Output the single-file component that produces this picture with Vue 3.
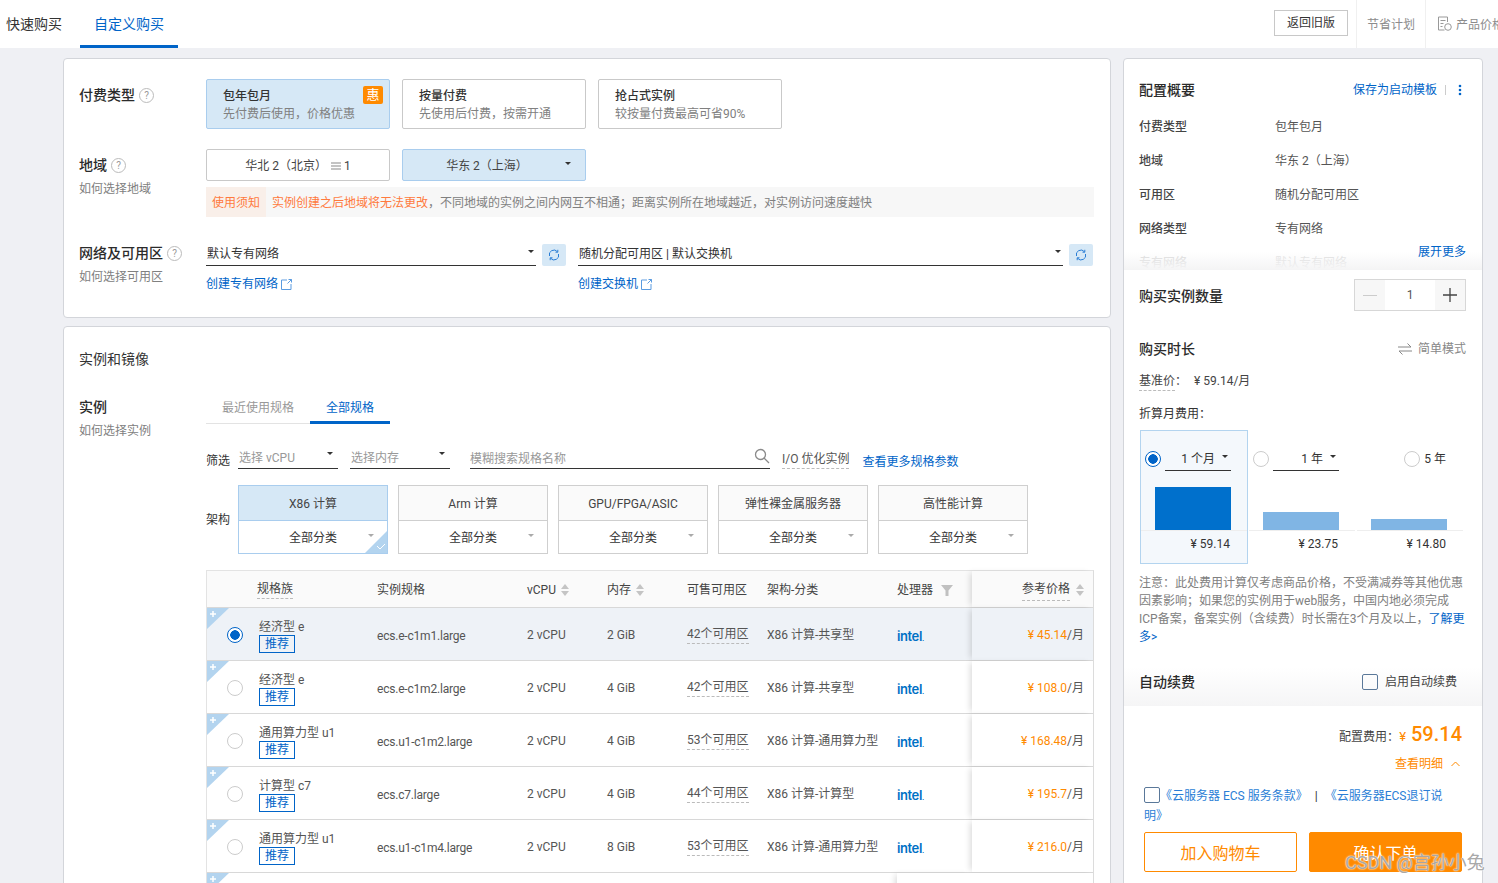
<script setup>
const pay = [
  { t: '包年包月', d: '先付费后使用，价格优惠', on: true },
  { t: '按量付费', d: '先使用后付费，按需开通' },
  { t: '抢占式实例', d: '较按量付费最高可省90%' }
]
const summary = [
  ['付费类型', '包年包月'],
  ['地域', '华东 2（上海）'],
  ['可用区', '随机分配可用区'],
  ['网络类型', '专有网络'],
  ['专有网络', '默认专有网络']
]
const arch = [
  { t: 'X86 计算', on: true },
  { t: 'Arm 计算' },
  { t: 'GPU/FPGA/ASIC' },
  { t: '弹性裸金属服务器' },
  { t: '高性能计算' }
]
const rows = [
  { fam: '经济型 e', spec: 'ecs.e-c1m1.large', cpu: '2 vCPU', mem: '2 GiB', zone: '42个可用区', cat: 'X86 计算-共享型', price: '¥ 45.14', on: true },
  { fam: '经济型 e', spec: 'ecs.e-c1m2.large', cpu: '2 vCPU', mem: '4 GiB', zone: '42个可用区', cat: 'X86 计算-共享型', price: '¥ 108.0' },
  { fam: '通用算力型 u1', spec: 'ecs.u1-c1m2.large', cpu: '2 vCPU', mem: '4 GiB', zone: '53个可用区', cat: 'X86 计算-通用算力型', price: '¥ 168.48' },
  { fam: '计算型 c7', spec: 'ecs.c7.large', cpu: '2 vCPU', mem: '4 GiB', zone: '44个可用区', cat: 'X86 计算-计算型', price: '¥ 195.7' },
  { fam: '通用算力型 u1', spec: 'ecs.u1-c1m4.large', cpu: '2 vCPU', mem: '8 GiB', zone: '53个可用区', cat: 'X86 计算-通用算力型', price: '¥ 216.0' }
]
const spans = [
  { label: '1 个月', price: '¥ 59.14', h: 43, on: true, select: true },
  { label: '1 年', price: '¥ 23.75', h: 18, select: true },
  { label: '5 年', price: '¥ 14.80', h: 11 }
]
</script>

<template>
  <div class="page">
    <header class="topbar">
      <nav class="tabs">
        <span class="tab first">快速购买</span>
        <span class="tab active">自定义购买</span>
      </nav>
      <button class="old">返回旧版</button>
      <span class="tool">节省计划</span>
      <span class="tool last">
        <svg width="15" height="15" viewBox="0 0 15 15" fill="none" stroke="#999" stroke-width="1"><path d="M10.5 6V1H1.500v13h6M3.500 4.500h5M3.500 7.500h3M3.500 10.500h2" /><circle cx="11" cy="11" r="3.300" /></svg>
        产品价格
      </span>
    </header>

    <main class="layout">
      <div class="left">
        <section class="card c1">
          <div class="row">
            <div class="lab pt">
              <div class="lab-t">付费类型 <i class="q">?</i></div>
            </div>
            <div class="opts">
              <div v-for="p in pay" :key="p.t" class="opt" :class="{ on: p.on }">
                <div class="opt-t">{{ p.t }}</div>
                <div class="opt-d">{{ p.d }}</div>
                <span v-if="p.on" class="hui">惠</span>
              </div>
            </div>
          </div>

          <div class="row r2">
            <div class="lab pt">
              <div class="lab-t">地域 <i class="q">?</i></div>
              <div class="lab-s">如何选择地域</div>
            </div>
            <div class="col">
              <div class="opts">
                <div class="reg">
                  华北 2（北京）
                  <svg width="12" height="10" viewBox="0 0 12 10" class="srv"><path d="M1 1h10v2H1zM1 4h10v2H1zM1 7h10v2H1z" fill="#c4c4c4" /></svg>
                  1
                </div>
                <div class="reg on">
                  <span class="reg-txt">华东 2（上海）</span>
                  <i class="caret dark"></i>
                </div>
              </div>
              <div class="notice">
                <span class="n-h">使用须知</span>
                <span class="n-b"><b>实例创建之后地域将无法更改</b>，不同地域的实例之间内网互不相通；距离实例所在地域越近，对实例访问速度越快</span>
              </div>
            </div>
          </div>

          <div class="row r3">
            <div class="lab">
              <div class="lab-t">网络及可用区 <i class="q">?</i></div>
              <div class="lab-s">如何选择可用区</div>
            </div>
            <div class="net">
              <div class="net-c n1">
                <div class="sel-wrap">
                  <div class="sel">默认专有网络<i class="caret dark"></i></div>
                  <span class="rf"><svg width="12" height="12" viewBox="0 0 12 12" fill="none" stroke="#2a7ed6" stroke-width="1"><path d="M1.500 7A4.600 4.600 0 0 1 9.500 2.800M10.500 5A4.600 4.600 0 0 1 2.500 9.200" /><path d="M9.800 .8v2.400H7.500M2.200 11.200V8.800h2.300" /></svg></span>
                </div>
                <a class="lnk">创建专有网络<svg width="11" height="11" viewBox="0 0 11 11" fill="none" stroke="#5a9be0" stroke-width="1"><path d="M6 1H.5v9.500H10V5M6.500 4.500 10.500.5M7.500.5h3v3" /></svg></a>
              </div>
              <div class="net-c n2">
                <div class="sel-wrap">
                  <div class="sel">随机分配可用区 | 默认交换机<i class="caret dark"></i></div>
                  <span class="rf"><svg width="12" height="12" viewBox="0 0 12 12" fill="none" stroke="#2a7ed6" stroke-width="1"><path d="M1.500 7A4.600 4.600 0 0 1 9.500 2.800M10.500 5A4.600 4.600 0 0 1 2.500 9.200" /><path d="M9.800 .8v2.400H7.500M2.200 11.200V8.800h2.300" /></svg></span>
                </div>
                <a class="lnk">创建交换机<svg width="11" height="11" viewBox="0 0 11 11" fill="none" stroke="#5a9be0" stroke-width="1"><path d="M6 1H.5v9.500H10V5M6.500 4.500 10.500.5M7.500.5h3v3" /></svg></a>
              </div>
            </div>
          </div>
        </section>

        <section class="card c2">
          <h2 class="sec">实例和镜像</h2>
          <div class="row r-inst">
            <div class="lab">
              <div class="lab-t">实例</div>
              <div class="lab-s">如何选择实例</div>
            </div>
            <div class="col wide">
              <div class="stabs">
                <span class="stab">最近使用规格</span>
                <span class="stab on">全部规格</span>
              </div>

              <div class="filters">
                <span class="f-l">筛选</span>
                <div class="f-s">选择 vCPU<i class="caret dark"></i></div>
                <div class="f-s">选择内存<i class="caret dark"></i></div>
                <div class="f-q">模糊搜索规格名称
                  <svg width="16" height="16" viewBox="0 0 16 16" fill="none" stroke="#8a8a8a" stroke-width="1.300"><circle cx="6.500" cy="6.500" r="5" /><path d="m10 10 5 5" /></svg>
                </div>
                <span class="f-io">I/O 优化实例</span>
                <a class="f-more">查看更多规格参数</a>
              </div>

              <div class="archs">
                <span class="f-l">架构</span>
                <div v-for="a in arch" :key="a.t" class="arch" :class="{ on: a.on }">
                  <div class="arch-t">{{ a.t }}</div>
                  <div class="arch-b">全部分类<i class="caret"></i></div>
                  <span v-if="a.on" class="tick">
                    <svg width="22" height="22" viewBox="0 0 22 22"><path d="M22 0v22H0z" fill="#b3d4ef" /><path d="m12 15 3 3 5-5" fill="none" stroke="#fff" stroke-width="1" /></svg>
                  </span>
                </div>
              </div>

              <div class="table">
                <div class="tr th">
                  <span></span>
                  <span class="cell-fam"><u>规格族</u></span>
                  <span>实例规格</span>
                  <span class="sortable">vCPU<i class="sort"></i></span>
                  <span class="sortable">内存<i class="sort"></i></span>
                  <span>可售可用区</span>
                  <span>架构-分类</span>
                  <span class="sortable">处理器<svg class="fun" width="12" height="11" viewBox="0 0 12 11"><path d="M0 0h12L7.500 5.500V11h-3V5.500z" fill="#c0c0c0" /></svg></span>
                  <span class="stick sortable end"><u>参考价格</u><i class="sort"></i></span>
                </div>
                <div v-for="r in rows" :key="r.spec" class="tr td" :class="{ on: r.on }">
                  <span class="corner"><svg width="22" height="21" viewBox="0 0 22 21"><path d="M0 0h22L0 21z" fill="#b3d4ef" /><path d="M6 3v6M3 6h6" stroke="#fff" stroke-width="1.500" /></svg></span>
                  <span class="rd-c"><i class="radio" :class="{ on: r.on }"></i></span>
                  <span class="fam">
                    <span class="fam-t">{{ r.fam }}</span>
                    <span class="rec">推荐</span>
                  </span>
                  <span class="tx">{{ r.spec }}</span>
                  <span class="tz">{{ r.cpu }}</span>
                  <span class="tz">{{ r.mem }}</span>
                  <span><em class="zone">{{ r.zone }}</em></span>
                  <span class="tz">{{ r.cat }}</span>
                  <span class="intel">intel<small>.</small></span>
                  <span class="stick end price"><b>{{ r.price }}</b>/月</span>
                </div>
                <div class="tr td">
                  <span class="corner"><svg width="22" height="21" viewBox="0 0 22 21"><path d="M0 0h22L0 21z" fill="#b3d4ef" /><path d="M6 3v6M3 6h6" stroke="#fff" stroke-width="1.500" /></svg></span>
                  <span></span><span></span><span></span><span></span><span></span><span></span><span></span>
                  <span class="stick"></span>
                </div>
              </div>
            </div>
          </div>
        </section>
      </div>

      <aside class="card side">
        <div class="sum">
          <div class="sum-h">
            <h3>配置概要</h3>
            <a>保存为启动模板</a>
            <i class="bar"></i>
            <svg width="4" height="12" viewBox="0 0 4 12"><g fill="#0064c8"><circle cx="2" cy="2" r="1.300" /><circle cx="2" cy="6" r="1.300" /><circle cx="2" cy="10" r="1.300" /></g></svg>
          </div>
          <div v-for="s in summary" :key="s[0]" class="sum-r">
            <span class="k">{{ s[0] }}</span><span>{{ s[1] }}</span>
          </div>
          <div class="fade"><a>展开更多</a></div>
        </div>

        <div class="qty">
          <h3>购买实例数量</h3>
          <div class="stepper">
            <span class="st-b"><i class="minus"></i></span>
            <span class="st-v">1</span>
            <span class="st-b"><svg width="14" height="14" viewBox="0 0 14 14"><path d="M7 0v14M0 7h14" stroke="#444" stroke-width="1.300" /></svg></span>
          </div>
        </div>

        <div class="dur">
          <div class="dur-h">
            <h3>购买时长</h3>
            <span class="swap"><svg width="14" height="12" viewBox="0 0 14 12" fill="none" stroke="#888" stroke-width="1"><path d="M0 4h13L9.500.5M14 8H1l3.500 3.500" /></svg>简单模式</span>
          </div>
          <div class="base"><em>基准价：</em><span>¥ 59.14/月</span></div>
          <div class="conv">折算月费用：</div>
          <div class="spans">
            <div v-for="s in spans" :key="s.label" class="span" :class="{ on: s.on, plain: !s.select }">
              <div class="span-top">
                <i class="radio" :class="{ on: s.on }"></i>
                <span v-if="s.select" class="span-sel">{{ s.label }}<i class="caret dark"></i></span>
                <span v-else class="span-txt">{{ s.label }}</span>
              </div>
              <div class="chart"><i class="barv" :class="{ on: s.on }" :style="{ height: s.h + 'px' }"></i></div>
              <div class="span-p">{{ s.price }}</div>
            </div>
          </div>
          <p class="note">注意：此处费用计算仅考虑商品价格，不受满减券等其他优惠因素影响；如果您的实例用于web服务，中国内地必须完成ICP备案，备案实例（含续费）时长需在3个月及以上，<a>了解更多&gt;</a></p>
        </div>

        <div class="auto">
          <h3>自动续费</h3>
          <label class="chk"><i class="box"></i>启用自动续费</label>
        </div>

        <div class="foot">
          <div class="cost">配置费用：<span class="yen">¥</span><b>59.14</b></div>
          <div class="detail">查看明细<svg width="9" height="6" viewBox="0 0 9 6" fill="none" stroke="#ff8a00" stroke-width="1"><path d="m.5 5 4-4 4 4" /></svg></div>
          <div class="terms"><i class="box"></i><a>《云服务器 ECS 服务条款》</a><span class="pipe">|</span><a>《云服务器ECS退订说<br />明》</a></div>
          <div class="btns">
            <button class="b-cart">加入购物车</button>
            <button class="b-buy">确认下单</button>
          </div>
        </div>
      </aside>
    </main>

    <span class="wm">CSDN @宫孙小兔</span>
  </div>
</template>

<style>
html, body { margin: 0; height: 883px; overflow: hidden; background: #eff0f4; }
</style>

<style scoped>
.page { position: relative; height: 883px; overflow: hidden; background: #eff0f4; color: #333; font: 12px/18px Roboto, "Noto Sans CJK SC", sans-serif; }
a { color: #0064c8; text-decoration: none; }
h2, h3, p { margin: 0; }
i, em { font-style: normal; }
u { text-decoration: none; border-bottom: 1px dashed #bbb; padding-bottom: 2px; }

.topbar { display: flex; height: 48px; background: #fff; overflow: hidden; align-items: stretch; white-space: nowrap; }
.tabs { width: 1274px; flex: none; display: flex; font-size: 14px; }
.tab { line-height: 48px; box-sizing: border-box; height: 48px; }
.tab.first { padding: 0 18px 0 6px; }
.tab.active { padding: 0 14px; color: #0064c8; border-bottom: 3px solid #0064c8; }
.old { flex: none; width: 74px; height: 26px; margin: 10px 8px 0 0; padding: 0; background: #fff; border: 1px solid #c8c8c8; font: inherit; color: #333; }
.tool { flex: none; border-left: 1px solid #f0f0f0; padding: 0 10px; line-height: 50px; color: #8c8c8c; }
.tool.last { padding: 2px 10px 0 11px; display: flex; align-items: center; gap: 4px; }
.tool.last svg { margin-bottom: 4px; }

.layout { display: flex; gap: 12px; padding: 10px 0 0 63px; align-items: flex-start; }
.left { width: 1048px; flex: none; display: flex; flex-direction: column; gap: 8px; }
.card { background: #fff; border: 1px solid #d3d5da; border-radius: 4px; box-sizing: border-box; }
.c1 { height: 260px; padding: 20px 16px 0 15px; }
.c2 { height: 600px; padding: 22px 16px 0 15px; }

.row { display: flex; }
.r2 { margin-top: 20px; }
.r3 { margin-top: 26px; }
.lab { width: 127px; flex: none; }
.lab.pt { padding-top: 6px; }
.lab-t { font-size: 14px; font-weight: 500; line-height: 20px; display: flex; align-items: center; gap: 4px; color: #2b2b2b; }
.lab-s { margin-top: 4px; line-height: 20px; color: #808080; }
.q { display: inline-block; width: 13px; height: 13px; border: 1px solid #bbb; border-radius: 50%; font-size: 10px; line-height: 13px; font-weight: 400; text-align: center; color: #999; }
.col { display: flex; flex-direction: column; width: 888px; }

.opts { display: flex; gap: 12px; }
.opt { position: relative; width: 184px; height: 50px; box-sizing: border-box; padding: 7px 16px 0; border: 1px solid #c9c9c9; border-radius: 2px; }
.opt.on, .reg.on { background: #d6e8f6; border-color: #a9cdee; }
.opt-t { font-weight: 500; }
.opt-d { color: #808080; white-space: nowrap; line-height: 19px; }
.hui { position: absolute; right: 6px; top: 6px; width: 20px; height: 18px; background: #ff8a00; color: #fff; text-align: center; font-size: 13px; border-radius: 2px; }
.reg { position: relative; width: 184px; height: 32px; box-sizing: border-box; border: 1px solid #c9c9c9; border-radius: 2px; display: flex; align-items: center; justify-content: center; color: #444; white-space: nowrap; padding-top: 1px; }
.reg-txt { margin-right: 14px; }
.srv { margin: 0 2px 0 3px; }
.reg .caret { position: absolute; right: 14px; top: 12px; }
.notice { display: flex; margin-top: 6px; height: 30px; line-height: 32px; background: #f7f7f7; color: #808080; }
.n-h { width: 60px; text-align: center; background: #f9efe9; color: #ff7a3d; }
.n-b { padding-left: 6px; }
.n-b b { font-weight: 400; color: #ff7a3d; }

.caret { display: inline-block; width: 0; height: 0; border: 3.500px solid transparent; border-top: 3.500px solid #aaa; border-bottom: 0; }
.caret.dark { border-top-color: #333; }

.net { display: flex; gap: 12px; width: 888px; }
.n1 { width: 360px; }
.n2 { width: 515px; }
.sel-wrap { display: flex; gap: 6px; }
.sel { flex: 1; height: 23px; box-sizing: border-box; border-bottom: 1px solid #333; padding: 2px 1px 0; line-height: 19px; display: flex; justify-content: space-between; align-items: flex-start; }
.sel .caret { margin: 5px 1px 0 0; }
.rf { width: 24px; height: 22px; background: #d6e8f6; border-radius: 2px; display: flex; align-items: center; justify-content: center; margin-top: 1px; }
.lnk { display: inline-flex; align-items: center; gap: 3px; margin-top: 9px; }

.sec { font-size: 14px; font-weight: 400; line-height: 20px; }
.r-inst { margin-top: 28px; }
.wide { width: 888px; }
.stabs { display: flex; height: 27px; border-bottom: 1px solid #e3e3e3; box-sizing: border-box; width: 184px; }
.stab { flex: none; padding: 2px 16px 0; color: #999; line-height: 18px; white-space: nowrap; }
.stab.on { color: #0064c8; border-bottom: 3px solid #0064c8; height: 27px; box-sizing: border-box; }

.filters { display: flex; margin-top: 23px; height: 22px; align-items: flex-start; white-space: nowrap; }
.f-l { width: 32px; flex: none; color: #333; }
.filters .f-l { padding-top: 5px; }
.f-s { width: 100px; height: 22px; box-sizing: border-box; margin-right: 12px; border-bottom: 1px solid #333; color: #999; padding: 2px 0 0 1px; line-height: 19px; display: flex; justify-content: space-between; }
.f-s .caret { margin: 3px 5px 0 0; }
.f-s + .f-q { margin-left: 8px; }
.f-q { width: 300px; height: 22px; box-sizing: border-box; border-bottom: 1px solid #333; color: #999; line-height: 24px; display: flex; justify-content: space-between; margin-right: 12px; }
.f-q svg { margin-top: 1px; }
.f-io { height: 22px; box-sizing: border-box; border-bottom: 1px dashed #bbb; color: #555; line-height: 25px; margin-right: 13px; }
.f-more { line-height: 20px; padding-top: 5px; }

.archs { display: flex; margin-top: 16px; gap: 10px; align-items: center; }
.archs .f-l { margin-right: -10px; }
.arch { position: relative; width: 150px; height: 69px; box-sizing: border-box; border: 1px solid #cfcfcf; text-align: center; }
.arch.on { border-color: #a9cdee; }
.arch-t { height: 35px; line-height: 37px; box-sizing: border-box; background: #fafafa; border-bottom: 1px solid #cfcfcf; color: #444; }
.arch.on .arch-t { background: #d6e8f6; border-bottom-color: #a9cdee; }
.arch-b { position: relative; line-height: 34px; }
.arch-b .caret { position: absolute; right: 13px; top: 13px; }
.tick { position: absolute; right: 0; bottom: 0; line-height: 0; }

.table { margin-top: 16px; border: 1px solid #e3e3e3; border-bottom: 0; border-right: 1px solid #dcdcdc; }
.tr { position: relative; display: grid; grid-template-columns: 50px 120px 150px 80px 80px 80px 130px 75px 121px; align-items: center; box-sizing: border-box; border-bottom: 1px solid #d8d8d8; white-space: nowrap; color: #555; }
.th { height: 37px; background: #fafafa; color: #444; }
.th > span:not(.stick) { padding-top: 2px; }
.th > .cell-fam:not(.stick) { padding-top: 0; }
.td { height: 53px; background: #fff; }
.td.on { background: #eef2f7; }
.sortable { display: flex; align-items: center; gap: 5px; }
.sort { position: relative; width: 8px; height: 12px; flex: none; }
.sort::before, .sort::after { content: ""; position: absolute; left: 0; border: 4px solid transparent; }
.sort::before { border-bottom: 5px solid #c4c4c4; border-top: 0; top: 0; }
.sort::after { bottom: 0; border-top: 5px solid #c4c4c4; border-bottom: 0; }
.fun { margin-left: 3px; }
.stick { align-self: stretch; background: inherit; box-shadow: -4px 0 6px -2px rgba(0, 0, 0, .14); display: flex; align-items: center; }
.end { justify-content: flex-end; padding-right: 9px; }
.th .stick.end { gap: 6px; padding-top: 2px; }
.corner { position: absolute; left: 0; top: 0; line-height: 0; }
.rd-c { display: flex; justify-content: center; padding-left: 6px; margin-top: 2px; }
.radio { display: inline-block; width: 16px; height: 16px; box-sizing: border-box; flex: none; border: 1px solid #ccc; border-radius: 50%; background: #fff; }
.radio.on { border-color: #0064c8; background: radial-gradient(circle, #0064c8 0 4.500px, #fff 5px); }
.fam { display: flex; flex-direction: column; align-items: flex-start; padding: 2px 0 0 2px; }
.fam-t { line-height: 18px; margin-top: 1px; }
.rec { margin-top: -1px; width: 36px; height: 18px; box-sizing: border-box; border: 1px solid #0064c8; color: #0064c8; text-align: center; line-height: 17px; }
.tx { padding-top: 4px; letter-spacing: -.2px; }
.tz { padding-top: 2px; }
.zone { border-bottom: 1px dashed #bbb; padding-bottom: 2px; }
.intel { font-family: Inter, sans-serif; font-size: 13px; font-weight: 600; color: #0071c5; letter-spacing: -.4px; padding-top: 6px; }
.intel small { font-size: 7px; }
.price { padding-top: 2px; }
.price b { font-weight: 400; color: #ff8a00; }

.side { width: 360px; height: 840px; flex: none; }
.sum { position: relative; height: 211px; overflow: hidden; padding: 21px 16px 0 15px; box-sizing: border-box; }
h3 { font-size: 14px; font-weight: 500; line-height: 20px; color: #2b2b2b; }
.sum-h { display: flex; align-items: center; height: 20px; margin-bottom: 10px; }
.sum-h h3 { flex: 1; }
.bar { width: 1px; height: 10px; background: #ccc; margin: 0 12px 0 8px; }
.sum-h svg { margin-right: 4px; }
.sum-r { display: flex; height: 34px; line-height: 34px; color: #555; }
.sum-r .k { width: 136px; font-weight: 500; color: #444; }
.fade { position: absolute; left: 0; right: 0; bottom: 0; height: 36px; background: linear-gradient(rgba(255, 255, 255, .2), rgba(255, 255, 255, .8) 50%, #f4f4f5 100%); text-align: right; padding: 9px 16px 0 0; box-sizing: border-box; }

.qty { display: flex; justify-content: space-between; align-items: center; padding: 9px 16px 0 15px; }
.qty h3 { margin-top: 2px; }
.stepper { display: flex; width: 112px; height: 32px; box-sizing: border-box; border: 1px solid #d7d7d7; }
.st-b { width: 30px; background: #f7f7f7; display: flex; align-items: center; justify-content: center; }
.minus { width: 14px; height: 1px; background: #ccc; }
.st-v { flex: 1; text-align: center; line-height: 30px; color: #555; }

.dur { padding: 28px 16px 0 15px; }
.dur-h { display: flex; justify-content: space-between; align-items: center; }
.swap { display: flex; align-items: center; gap: 6px; color: #888; }
.base { margin-top: 13px; display: flex; line-height: 18px; color: #444; }
.base em { width: 36px; margin-right: 19px; border-bottom: 1px dashed #bbb; white-space: nowrap; height: 18px; }
.conv { margin-top: 14px; height: 18px; color: #333; }
.spans { display: flex; margin-top: 7px; margin-left: 1px; }
.span { width: 108px; height: 134px; box-sizing: border-box; border: 1px solid transparent; padding-top: 15px; }
.span.on { background: #f4f8fc; border-color: #b3d4ef; }
.span-top { display: flex; align-items: center; height: 25px; padding-left: 4px; gap: 4px; }
.span-sel { position: relative; width: 66px; height: 25px; box-sizing: border-box; border-bottom: 1px solid #333; line-height: 27px; padding-right: 16px; text-align: right; }
.span-sel .caret { position: absolute; right: 3px; top: 9px; }
.plain .span-top { justify-content: flex-end; padding-right: 17px; gap: 4px; }
.chart { height: 59px; display: flex; align-items: flex-end; padding-left: 14px; }
.barv { width: 76px; background: #80b5e4; display: block; }
.barv.on { background: #0070cc; }
.span-p { border-top: 1px solid #eee; width: 106px; box-sizing: border-box; line-height: 27px; padding-right: 17px; text-align: right; }
.note { margin-top: 10px; width: 326px; color: #808080; line-height: 18px; }

.auto { display: flex; justify-content: space-between; align-items: flex-start; height: 60px; box-sizing: border-box; padding: 26px 25px 0 15px; background: linear-gradient(#fff 35%, #f5f5f6); }
.chk { display: flex; align-items: center; gap: 7px; color: #444; margin-top: 1px; }
.box { display: inline-block; width: 16px; height: 16px; box-sizing: border-box; border: 1px solid #5a7899; border-radius: 2px; flex: none; }

.foot { padding: 17px 20px 0; }
.cost { display: flex; justify-content: flex-end; align-items: baseline; color: #444; height: 22px; line-height: 22px; }
.yen { color: #ff8a00; margin-right: 5px; font-size: 13px; }
.cost b { color: #ff8a00; font-size: 20px; font-weight: 500; }
.detail { display: flex; justify-content: flex-end; align-items: center; gap: 8px; margin-top: 10px; color: #ff8a00; padding-right: 2px; }
.terms { margin-top: 13px; width: 318px; line-height: 20px; color: #333; }
.terms .box { vertical-align: -3px; }
.terms a { color: #2a7ed6; }
.pipe { margin: 0 7px; }
.btns { display: flex; gap: 12px; margin-top: 6px; }
.btns button { width: 153px; height: 40px; border-radius: 2px; font: 16px Roboto, "Noto Sans CJK SC", sans-serif; padding: 0; }
.b-cart { background: #fff; border: 1px solid #ff8a00; color: #ff8a00; }
.b-buy { background: #ff8a00; border: 1px solid #ff8a00; color: #fff; }

.wm { position: absolute; left: 1345px; top: 851px; font-size: 18px; line-height: 24px; color: rgba(130, 130, 130, .7); text-shadow: 0 0 2px #fff, 0 0 1px #fff; white-space: nowrap; }
</style>
